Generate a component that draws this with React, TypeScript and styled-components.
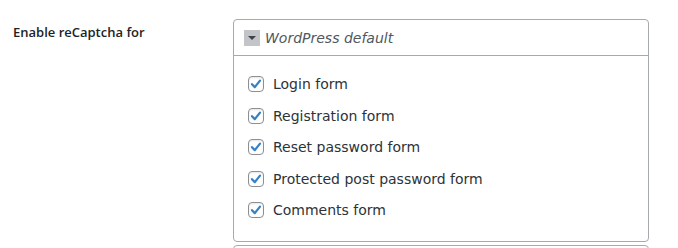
import React from "react";
import styled, { createGlobalStyle } from "styled-components";

const GlobalStyle = createGlobalStyle`
    html, body {
        margin: 0;
        padding: 0;
        background: #ffffff;
    }
    body {
        font-family: "DejaVu Sans", Verdana, sans-serif;
        color: #1d2327;
    }
`;

const forms = [
    "Login form",
    "Registration form",
    "Reset password form",
    "Protected post password form",
    "Comments form",
];

const CheckIcon = () => (
    <svg width="12" height="12" viewBox="0 0 12 12">
        <path d="M2 6.2 L4.8 9.1 L10 2.6" fill="none" stroke="#3582c4" strokeWidth="2.3" strokeLinecap="round" strokeLinejoin="round" />
    </svg>
);

const App = () => {
    return (
        <>
            <GlobalStyle />
            <Page>
                <Label>Enable reCaptcha for</Label>
                <Fields>
                    <Panel>
                        <PanelHeader>
                            <Toggle>
                                <Caret />
                            </Toggle>
                            <HeaderTitle>WordPress default</HeaderTitle>
                        </PanelHeader>
                        <PanelBody>
                            {forms.map((f) => (
                                <Option key={f}>
                                    <Box>
                                        <CheckIcon />
                                    </Box>
                                    <OptionText>{f}</OptionText>
                                </Option>
                            ))}
                        </PanelBody>
                    </Panel>
                    <NextPanel />
                </Fields>
            </Page>
        </>
    );
};

export default App;

const Page = styled.div`
    display: flex;
    align-items: flex-start;
    padding: 19px 0 0 13px;
    width: 678px;
    height: 248px;
    box-sizing: border-box;
    overflow: hidden;
`;

const Label = styled.div`
    width: 220px;
    flex-shrink: 0;
    padding-top: 4px;
    font-family: "Open Sans", "Liberation Sans", sans-serif;
    font-weight: 600;
    font-size: 13px;
    line-height: 18px;
    color: #1d2327;
`;

const Fields = styled.div`
    display: flex;
    flex-direction: column;
    gap: 3px;
    width: 416px;
`;

const Panel = styled.div`
    border: 1px solid #a7aaad;
    border-radius: 4px;
    background: #fff;
`;

const PanelHeader = styled.div`
    display: flex;
    align-items: center;
    gap: 5px;
    height: 35px;
    padding-left: 10px;
    border-bottom: 1px solid #a7aaad;
`;

const Toggle = styled.div`
    width: 16px;
    height: 16px;
    background: #c3c4c7;
    display: flex;
    align-items: center;
    justify-content: center;
`;

const Caret = styled.div`
    width: 0;
    height: 0;
    border-left: 4px solid transparent;
    border-right: 4px solid transparent;
    border-top: 4px solid #3c434a;
`;

const HeaderTitle = styled.span`
    font-style: italic;
    font-size: 14px;
    color: #50575e;
`;

const PanelBody = styled.div`
    display: flex;
    flex-direction: column;
    gap: 15.5px;
    padding: 20px 14px 23px 14px;
`;

const Option = styled.div`
    display: flex;
    align-items: center;
    gap: 9px;
    height: 16px;
`;

const Box = styled.div`
    width: 14px;
    height: 14px;
    border: 1px solid #8c8f94;
    border-radius: 4px;
    background: #fff;
    display: flex;
    align-items: center;
    justify-content: center;
    box-shadow: inset 0 1px 2px rgba(0, 0, 0, 0.1);
`;

const OptionText = styled.span`
    font-size: 14px;
    color: #2c3338;
`;

const NextPanel = styled.div`
    height: 20px;
    border: 1px solid #a7aaad;
    border-radius: 4px;
`;
